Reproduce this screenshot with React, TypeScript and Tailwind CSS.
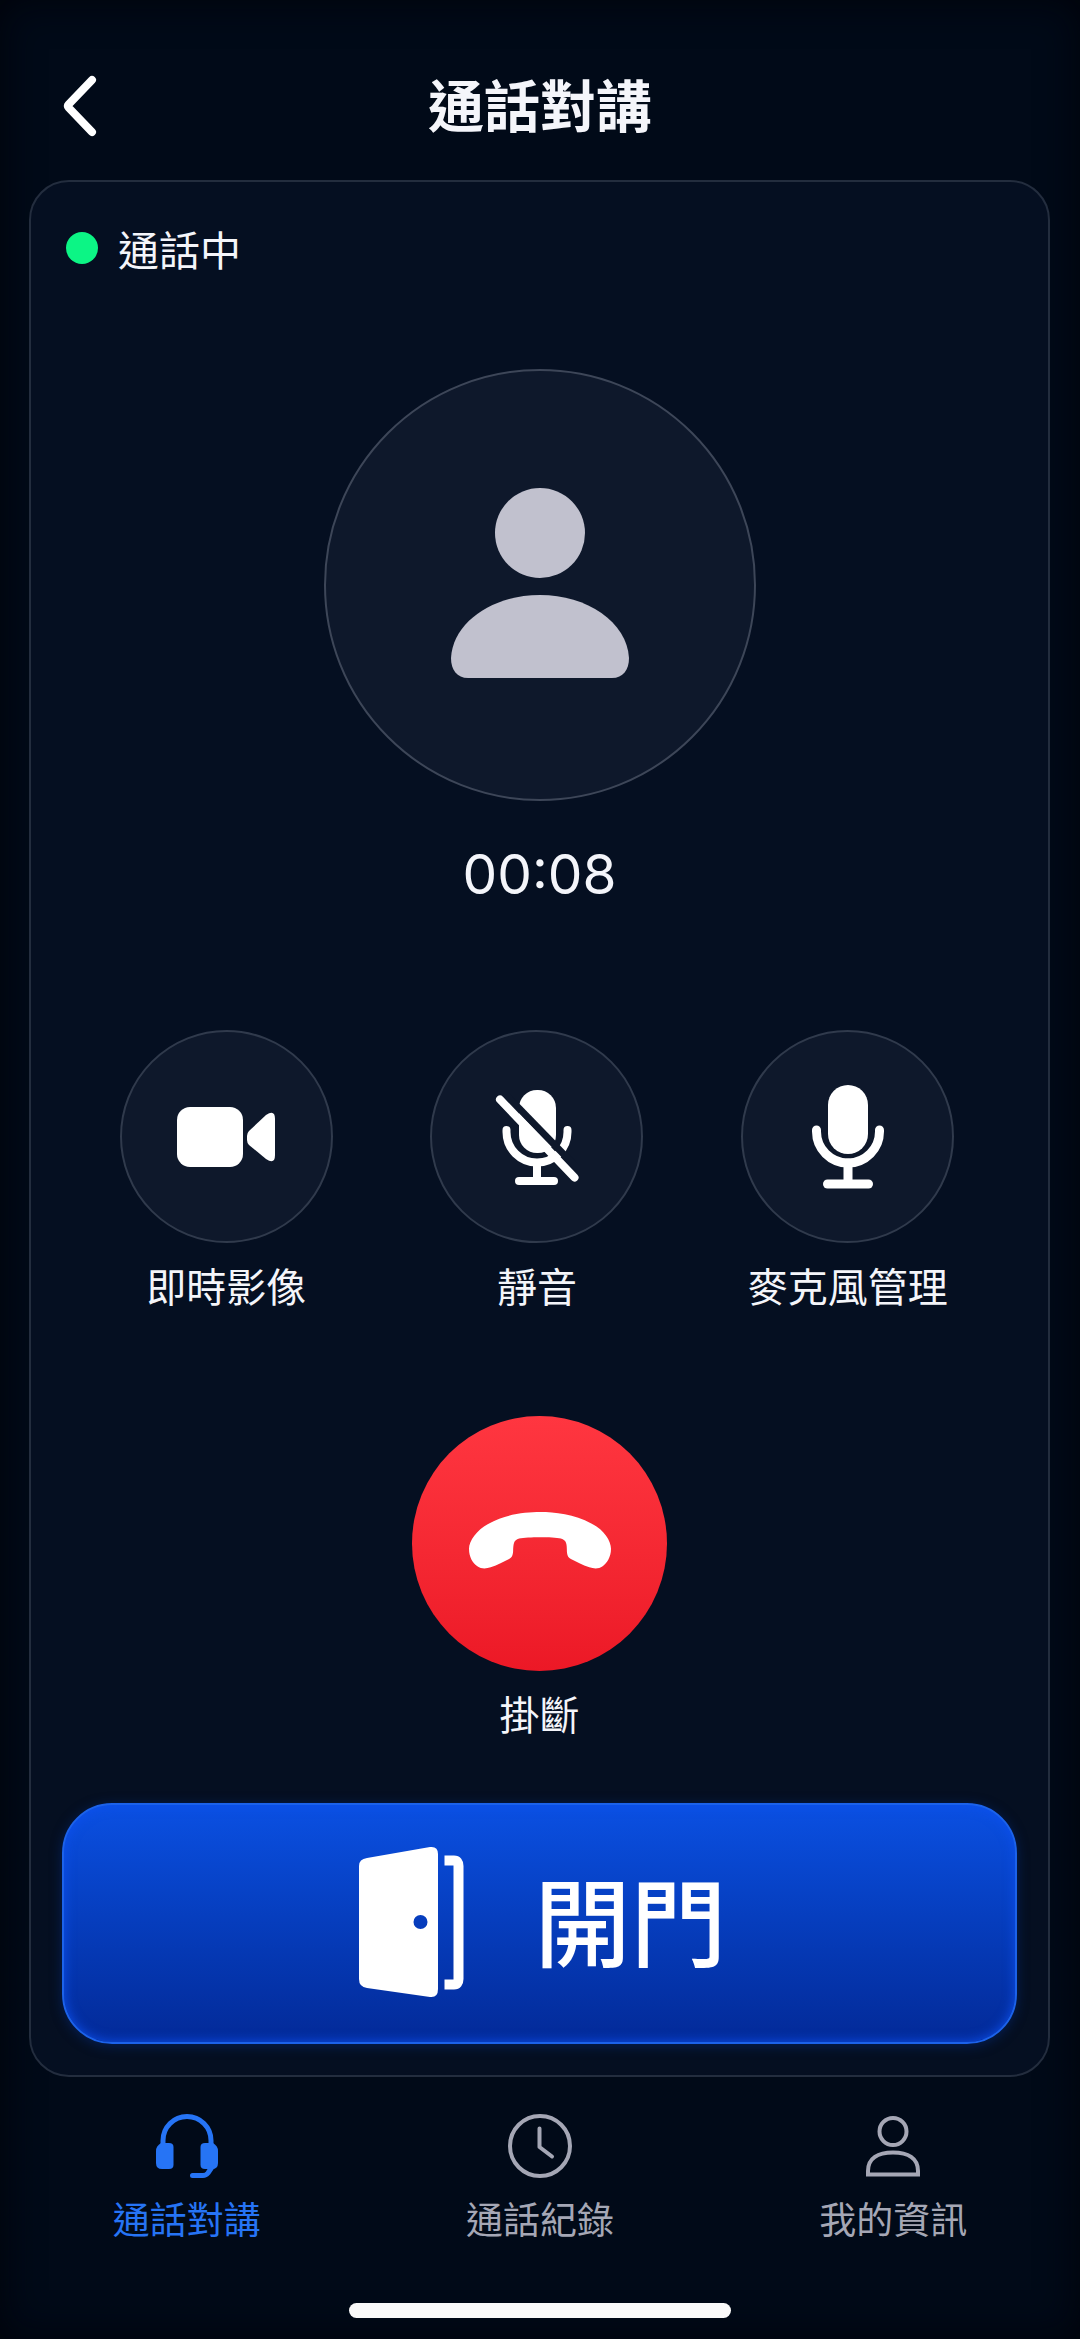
import type { ReactNode } from "react";

interface CallControl {
  label: string;
  icon: ReactNode;
}

interface Tab {
  label: string;
  href: string;
  icon: ReactNode;
  active?: boolean;
}

function BackIcon() {
  return (
    <svg width="38" height="76" viewBox="0 0 38 76" fill="none">
      <path
        d="M32 15 L8.5 39.5 Q7 41 8.5 42.5 L32 67"
        stroke="white"
        strokeWidth="8"
        strokeLinecap="round"
        strokeLinejoin="round"
      />
    </svg>
  );
}

function AvatarIcon() {
  return (
    <svg width="178" height="191" viewBox="0 0 178 191" fill="#c1c1ce">
      <circle cx="89" cy="45" r="45" />
      <path d="M17 190 C6 190 0 182 0 170 C2 134 42 107 89 107 S176 134 178 170 C178 182 172 190 161 190 Z" />
    </svg>
  );
}

function VideoIcon() {
  return (
    <svg width="98" height="60" viewBox="0 0 98 60" fill="white">
      <rect width="66" height="60" rx="13" />
      <path d="M72 24 L89 8 Q98 2 98 12 V48 Q98 58 89 52 L72 38 Q70 36 70 33 V29 Q70 26 72 24 Z" />
    </svg>
  );
}

function MuteIcon() {
  return (
    <svg width="84" height="96" viewBox="0 0 84 96" fill="none">
      <rect x="24" y="1" width="37" height="63" rx="18" fill="white" />
      <g stroke="white" strokeWidth="8" strokeLinecap="round">
        <path d="M11.5 41 V43 A30.5 30.5 0 0 0 72.5 43 V41" />
        <path d="M42 74 V91" />
        <path d="M24 92 H59" />
      </g>
      <path d="M11 6 L85 82" stroke="#0e182b" strokeWidth="7" />
      <path
        d="M5 10.5 L79.5 88.5"
        stroke="white"
        strokeWidth="8"
        strokeLinecap="round"
      />
    </svg>
  );
}

function MicIcon() {
  return (
    <svg width="74" height="104" viewBox="0 0 74 104" fill="none">
      <rect x="17" width="40" height="69" rx="20" fill="white" />
      <g stroke="white" strokeWidth="9" strokeLinecap="round">
        <path d="M5.5 45 V46.5 A31.5 31.5 0 0 0 68.5 46.5 V45" />
        <path d="M37 78 V98" />
        <path d="M16.5 99 H57.5" />
      </g>
    </svg>
  );
}

function HangUpIcon() {
  return (
    <svg width="142" height="57" viewBox="0 0 425 170" fill="white">
      <path d="M0 110 C0 85 25 52 60 34 C110 6 170 0 213 0 C256 0 316 6 366 34 C403 52 425 85 425 110 C425 136 412 154 400 162 C388 170 375 170 360 165 C340 158 320 148 305 140 C295 135 294 128 293 118 C293 95 292 84 275 79 C250 74 176 74 150 79 C133 84 133 95 132 118 C131 128 130 135 120 140 C105 148 85 158 65 165 C50 170 37 170 25 162 C12 154 0 136 0 110 Z" />
    </svg>
  );
}

function DoorIcon() {
  return (
    <svg width="106" height="152" viewBox="0 0 106 152" fill="none">
      <path
        fill="white"
        fillRule="evenodd"
        d="M8 12 L71 1 Q79 0 79 8 V143 Q79 152 71 151 L8 142 Q0 141 0 133 V20 Q0 13 8 12 Z M54.5 76 a7 7 0 1 0 14 0 a7 7 0 1 0 -14 0 Z"
      />
      <path
        d="M85.5 14.5 H95 Q99.5 14.5 99.5 20 V133 Q99.5 138.5 95 138.5 H85.5"
        stroke="white"
        strokeWidth="10"
      />
    </svg>
  );
}

function HeadsetIcon() {
  return (
    <svg width="64" height="64" viewBox="0 0 64 64" fill="none">
      <g stroke="currentColor" strokeWidth="5" strokeLinecap="round">
        <path d="M8 32 V26.5 A24 24 0 0 1 56 26.5 V32" />
        <path d="M57 53 L53 59 Q51 61.5 48 61.5 H37.5" />
      </g>
      <g fill="currentColor">
        <path d="M6 29 H14 Q18.5 29 18.5 33 V51 Q18.5 55 14 55 H7 Q1 55 1 49 V37 Q1 32 6 29 Z" />
        <path d="M58 29 H50 Q45.5 29 45.5 33 V51 Q45.5 55 50 55 H57 Q63 55 63 49 V37 Q63 32 58 29 Z" />
      </g>
    </svg>
  );
}

function ClockIcon() {
  return (
    <svg
      width="64"
      height="64"
      viewBox="0 0 64 64"
      fill="none"
      stroke="currentColor"
      strokeWidth="4"
      strokeLinecap="round"
      strokeLinejoin="round"
    >
      <circle cx="32" cy="32" r="30" />
      <path d="M31.5 14.5 V33 L44 42.5" />
    </svg>
  );
}

function PersonIcon() {
  return (
    <svg
      width="64"
      height="64"
      viewBox="0 0 64 64"
      fill="none"
      stroke="currentColor"
      strokeWidth="4"
    >
      <circle cx="32" cy="17.5" r="13.5" />
      <path d="M7 60.5 V57 C7 44 17 38.5 32 38.5 S57 44 57 57 V60.5 Z" />
    </svg>
  );
}

const controls: CallControl[] = [
  { label: "即時影像", icon: <VideoIcon /> },
  { label: "靜音", icon: <MuteIcon /> },
  { label: "麥克風管理", icon: <MicIcon /> },
];

const tabs: Tab[] = [
  { label: "通話對講", href: "#call", icon: <HeadsetIcon />, active: true },
  { label: "通話紀錄", href: "#history", icon: <ClockIcon /> },
  { label: "我的資訊", href: "#profile", icon: <PersonIcon /> },
];

export default function App() {
  return (
    <div className="min-h-screen flex flex-col bg-[#010a18] shadow-[inset_0_0_40px_#00030a] font-['Noto_Sans_CJK_TC',sans-serif] text-[#f4f5fa]">
      {/* Header */}
      <header className="grid grid-cols-[1fr_auto_1fr] items-center px-[60px] pt-[65px] pb-[39px]">
        <button type="button" aria-label="返回" className="justify-self-start">
          <BackIcon />
        </button>
        <h1 className="text-[56px] leading-[76px] font-bold">通話對講</h1>
      </header>

      {/* Call panel */}
      <main className="ml-[29px] mr-[30px] flex flex-col rounded-[40px] border-2 border-[#232d3e] bg-[#050f21] px-[31px] pt-9 pb-[31px]">
        <div className="flex items-center gap-5 pl-1">
          <span className="size-8 rounded-full bg-[#0cf585]" />
          <p className="text-[41px] leading-[60px]">通話中</p>
        </div>

        <div className="mt-[91px] size-[432px] self-center rounded-full border-2 border-[#3d4658] bg-[#0e182b] pb-1 flex items-center justify-center">
          <AvatarIcon />
        </div>
        <time className="mt-[41px] self-center font-['Inter',sans-serif] text-[55px] leading-[64px]">
          00:08
        </time>

        <div className="mt-[124px] grid grid-cols-3 pl-[9px] pr-[14px]">
          {controls.map((control) => (
            <button
              type="button"
              key={control.label}
              className="flex flex-col items-center"
            >
              <span className="size-[213px] rounded-full border-2 border-[#303a4c] bg-[#0e182b] flex items-center justify-center">
                {control.icon}
              </span>
              <span className="mt-3 text-[40px] leading-[60px]">
                {control.label}
              </span>
            </button>
          ))}
        </div>

        <button
          type="button"
          className="mt-[101px] self-center flex flex-col items-center"
        >
          <span className="size-[255px] rounded-full bg-linear-to-b from-[#ff3640] to-[#ec1826] pb-1.5 flex items-center justify-center">
            <HangUpIcon />
          </span>
          <span className="mt-3 text-[40px] leading-[60px]">掛斷</span>
        </button>

        <button
          type="button"
          className="mt-[60px] h-[241px] rounded-[50px] border-2 border-[#1c62ea] bg-linear-to-b from-[#0b50e2] to-[#032a98] shadow-[0_2px_12px_#06308a80,inset_0_0_12px_#0d50ee] pb-1 pl-1.5 flex items-center justify-center gap-[70px] text-[96px] leading-[120px] font-medium text-white"
        >
          <DoorIcon />
          <span className="pb-2">開門</span>
        </button>
      </main>

      {/* Bottom tabs */}
      <nav className="grid grid-cols-3 px-[10px] pt-[37px]">
        {tabs.map((tab) => (
          <a
            key={tab.label}
            href={tab.href}
            className={`flex flex-col items-center gap-4 text-[37px] leading-[48px] ${
              tab.active ? "text-[#2674f5]" : "text-[#a5a7b5]"
            }`}
          >
            {tab.icon}
            {tab.label}
          </a>
        ))}
      </nav>

      {/* Home indicator */}
      <div className="mt-[61px] mb-[21px] h-[15px] w-[382px] self-center rounded-full bg-[#fafafa]" />
    </div>
  );
}
